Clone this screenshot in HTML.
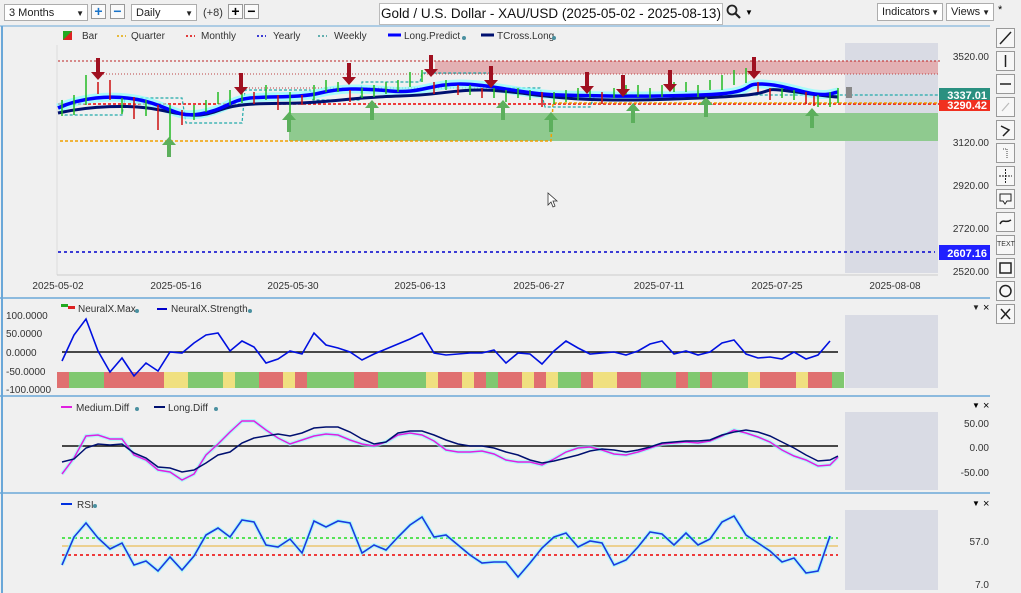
<!DOCTYPE html>
<html><head><meta charset="utf-8"><style>
body{margin:0;width:1021px;height:593px;overflow:hidden;background:#f0f0f0;font-family:"Liberation Sans",sans-serif;position:relative}
.tb{position:absolute;top:0;left:0;width:1021px;height:27px;background:#f0f0f0}
.sel{position:absolute;top:4px;height:17px;border:1px solid #adadad;background:#fff;font-size:11px;line-height:17px;padding-left:4px;box-sizing:border-box;color:#222}
.sel:after{content:"▼";position:absolute;right:3px;font-size:8px}
.btn{position:absolute;top:4px;width:15px;height:15px;border:1px solid #999;background:#fafafa;box-sizing:border-box;font-size:14px;line-height:12px;text-align:center;font-weight:bold}
.rb{position:absolute;left:996px;width:19px;height:20px;border:1px solid #999;background:#f7f7f7;box-sizing:border-box}
svg{position:absolute;top:0;left:0}
</style></head><body>
<div class="tb">
<div class="sel" style="left:4px;width:84px">3 Months</div>
<div class="btn" style="left:91px;color:#1a73c8">+</div>
<div class="btn" style="left:110px;color:#1a73c8">−</div>
<div class="sel" style="left:131px;width:66px">Daily</div>
<div style="position:absolute;left:203px;top:7px;font-size:11px;color:#333">(+8)</div>
<div class="btn" style="left:228px">+</div>
<div class="btn" style="left:244px">−</div>
<div style="position:absolute;left:379px;top:3px;width:342px;height:20px;border:1px solid #bbb;background:#fff;font-size:13.5px;line-height:20px;text-align:center;color:#111;white-space:nowrap;overflow:hidden">Gold / U.S. Dollar - XAU/USD (2025-05-02 - 2025-08-13)</div>
<svg style="left:726px;top:4px" width="16" height="16"><circle cx="6" cy="6" r="4.5" stroke="#222" stroke-width="1.8" fill="none"/><line x1="9.5" y1="9.5" x2="14" y2="14" stroke="#222" stroke-width="2.2"/></svg>
<div style="position:absolute;left:745px;top:8px;font-size:8px">▼</div>
<div class="sel" style="left:877px;width:66px;height:18px;top:3px">Indicators</div>
<div class="sel" style="left:946px;width:48px;height:18px;top:3px">Views</div>
<div style="position:absolute;left:998px;top:4px;font-size:11px">*</div>
</div>
<svg width="1021" height="593" viewBox="0 0 1021 593" font-family="Liberation Sans, sans-serif">
<defs><path id="da" d="M-2,0h4v14h5l-7,8l-7,-8h5z"/><path id="ua" d="M-2,20h4v-12h5l-7,-8l-7,8h5z"/></defs>
<line x1="0" y1="26" x2="990" y2="26" stroke="#6aa7d8"/>
<line x1="2" y1="26" x2="2" y2="593" stroke="#6aa7d8" stroke-width="2"/>
<rect x="63" y="31" width="9" height="9" fill="#2a2"/><polygon points="72,31 72,40 63,40" fill="#d22"/>
<g font-size="10" fill="#333">
<text x="82" y="39">Bar</text>
<line x1="117" y1="36" x2="126" y2="36" stroke="#e6a800" stroke-dasharray="2,2" stroke-width="1.5"/><text x="131" y="39">Quarter</text>
<line x1="186" y1="36" x2="195" y2="36" stroke="#d00" stroke-dasharray="2,2" stroke-width="1.5"/><text x="201" y="39">Monthly</text>
<line x1="257" y1="36" x2="266" y2="36" stroke="#00c" stroke-dasharray="2,2" stroke-width="1.5"/><text x="273" y="39">Yearly</text>
<line x1="318" y1="36" x2="327" y2="36" stroke="#399" stroke-dasharray="2,2" stroke-width="1.5"/><text x="334" y="39">Weekly</text>
<line x1="388" y1="35" x2="401" y2="35" stroke="#00f" stroke-width="3"/><text x="404" y="39">Long.Predict</text><circle cx="464" cy="38" r="2" fill="#4a90a0"/>
<line x1="481" y1="35" x2="494" y2="35" stroke="#001070" stroke-width="3"/><text x="497" y="39">TCross.Long</text><circle cx="554" cy="38" r="2" fill="#4a90a0"/>
</g>
<line x1="57" y1="45" x2="57" y2="275" stroke="#ddd"/>
<rect x="845" y="43" width="93" height="230" fill="#d9dbe4"/>
<rect x="435" y="61" width="503" height="13" fill="#e3b0b3"/>
<rect x="289" y="113" width="649" height="28" fill="#8fca8f"/>
<line x1="58" y1="61" x2="940" y2="61" stroke="#b22" stroke-dasharray="2,2"/>
<line x1="100" y1="74" x2="940" y2="74" stroke="#b44" stroke-dasharray="1,2"/>
<line x1="240" y1="88" x2="520" y2="88" stroke="#b44" stroke-dasharray="1,2"/>
<line x1="58" y1="104" x2="940" y2="104" stroke="#e00" stroke-dasharray="3,2" stroke-width="1.5"/>
<polyline points="60,141 551,141 553,103 940,103" fill="none" stroke="#f0a000" stroke-dasharray="3,2" stroke-width="1.5"/>
<line x1="58" y1="252" x2="935" y2="252" stroke="#00c" stroke-dasharray="3,3" stroke-width="1.5"/>
<polyline points="62,100 65,115 122,115 125,98 182,98 186,123 242,123 245,90 310,90 313,100 360,100 362,82 420,82 422,73 490,73 495,88 540,88 545,107 590,107 595,95 940,95" fill="none" stroke="#2aa" stroke-dasharray="3,2" stroke-width="1.2"/>
<path d="M58,108 C80,98 110,94 140,100 S175,118 200,114 S230,100 250,98 S300,98 320,93 S360,88 390,91 S430,84 460,84 S520,94 560,95 S640,97 700,95 S740,84 760,84 S800,92 815,94 S835,92 838,92" fill="none" stroke="#8ff" stroke-width="9" opacity=".7"/>
<path d="M58,113 C90,106 130,104 160,110 S200,118 220,110 S270,104 300,103 S360,97 400,96 S450,90 480,90 S540,97 580,99 S660,100 720,97 S760,88 780,90 S820,96 838,97" fill="none" stroke="#001070" stroke-width="3"/>
<path d="M58,108 C80,98 110,94 140,100 S175,118 200,114 S230,100 250,98 S300,98 320,93 S360,88 390,91 S430,84 460,84 S520,94 560,95 S640,97 700,95 S740,84 760,84 S800,92 815,94 S835,92 838,92" fill="none" stroke="#0000ff" stroke-width="3.5"/>
<g stroke-width="1.5">
<g stroke="#2b2"><path d="M62,100v16M74,95v20M86,75v30M122,98v16M146,100v16M170,105v40M194,105v15M206,100v12M218,92v12M230,90v15M242,88v15M266,85v15M290,92v22M314,85v15M326,80v12M338,82v10M362,88v10M374,85v12M386,82v12M398,80v12M410,72v15M422,70v12M446,80v10M470,85v10M494,88v10M506,90v12M518,88v10M530,90v10M554,92v12M566,90v12M578,88v12M590,88v10M614,88v10M626,85v10M638,85v12M650,88v10M662,85v12M674,82v10M686,82v10M698,85v12M710,80v10M722,75v15M734,70v15M746,68v15M782,88v10M794,90v10M818,95v12M830,92v15M838,88v15"/></g>
<g stroke="#c11"><path d="M98,82v12M110,80v20M134,97v22M158,105v25M182,110v15M254,92v12M278,95v15M302,95v10M350,90v12M434,82v12M458,85v10M482,88v10M542,92v15M602,92v12M758,82v10M770,88v12M806,92v12M814,96v10"/></g>
</g>
<g fill="#a01020">
<use href="#da" x="98" y="58"/><use href="#da" x="241" y="73"/><use href="#da" x="349" y="63"/><use href="#da" x="431" y="55"/><use href="#da" x="491" y="66"/><use href="#da" x="587" y="72"/><use href="#da" x="623" y="75"/><use href="#da" x="670" y="70"/><use href="#da" x="754" y="57"/></g>
<g fill="#5caf5c">
<use href="#ua" x="169" y="137"/><use href="#ua" x="289" y="112"/><use href="#ua" x="372" y="100"/><use href="#ua" x="503" y="100"/><use href="#ua" x="551" y="112"/><use href="#ua" x="633" y="103"/><use href="#ua" x="706" y="97"/><use href="#ua" x="812" y="108"/></g>
<rect x="846" y="87" width="6" height="11" fill="#888"/>
<g font-size="10" fill="#333" text-anchor="end">
<text x="989" y="60">3520.00</text><text x="989" y="146">3120.00</text><text x="989" y="189">2920.00</text><text x="989" y="232">2720.00</text><text x="989" y="275">2520.00</text></g>
<rect x="939" y="88" width="51" height="13" fill="#2a9080"/><text x="987" y="99" font-size="11" font-weight="bold" fill="#fff" text-anchor="end">3337.01</text>
<rect x="939" y="100" width="51" height="11" fill="#f03020"/><text x="987" y="109" font-size="11" font-weight="bold" fill="#fff" text-anchor="end">3290.42</text>
<rect x="939" y="245" width="51" height="15" fill="#2020ff"/><text x="987" y="257" font-size="11" font-weight="bold" fill="#fff" text-anchor="end">2607.16</text>
<line x1="57" y1="275" x2="938" y2="275" stroke="#ccc"/>
<g font-size="10" fill="#333" text-anchor="middle">
<text x="58" y="289">2025-05-02</text><text x="176" y="289">2025-05-16</text><text x="293" y="289">2025-05-30</text><text x="420" y="289">2025-06-13</text><text x="539" y="289">2025-06-27</text><text x="659" y="289">2025-07-11</text><text x="777" y="289">2025-07-25</text><text x="895" y="289">2025-08-08</text></g>
<path d="M548,193 l0,12 l3,-3 l2,5 l2,-1 l-2,-5 l4,0z" fill="#fff" stroke="#333" stroke-width=".8"/>
<line x1="0" y1="298" x2="990" y2="298" stroke="#6aa7d8" stroke-width="1.5"/>
<rect x="845" y="315" width="93" height="73" fill="#d9dbe4"/>
<g font-size="8" fill="#222"><text x="972" y="310">▼</text></g><text x="983" y="311" font-size="11">×</text>
<rect x="61" y="304" width="7" height="3" fill="#2a2"/><rect x="68" y="306" width="7" height="3" fill="#d22"/>
<text x="78" y="312" font-size="10" fill="#333">NeuralX.Max</text><circle cx="137" cy="311" r="2" fill="#4a90a0"/>
<line x1="157" y1="309" x2="167" y2="309" stroke="#00c" stroke-width="2"/><text x="171" y="312" font-size="10" fill="#333">NeuralX.Strength</text><circle cx="250" cy="311" r="2" fill="#4a90a0"/>
<g font-size="10" fill="#333"><text x="6" y="319">100.0000</text><text x="6" y="337">50.0000</text><text x="6" y="356">0.0000</text><text x="6" y="375">-50.0000</text><text x="6" y="393">-100.0000</text></g>
<g>
<rect x="57" y="372" width="12" height="16" fill="#e07070"/><rect x="69" y="372" width="35" height="16" fill="#80c870"/><rect x="104" y="372" width="60" height="16" fill="#e07070"/><rect x="164" y="372" width="24" height="16" fill="#f0e080"/><rect x="188" y="372" width="35" height="16" fill="#80c870"/><rect x="223" y="372" width="12" height="16" fill="#f0e080"/><rect x="235" y="372" width="24" height="16" fill="#80c870"/><rect x="259" y="372" width="24" height="16" fill="#e07070"/><rect x="283" y="372" width="12" height="16" fill="#f0e080"/><rect x="295" y="372" width="12" height="16" fill="#e07070"/><rect x="307" y="372" width="47" height="16" fill="#80c870"/><rect x="354" y="372" width="24" height="16" fill="#e07070"/><rect x="378" y="372" width="48" height="16" fill="#80c870"/><rect x="426" y="372" width="12" height="16" fill="#f0e080"/><rect x="438" y="372" width="24" height="16" fill="#e07070"/><rect x="462" y="372" width="12" height="16" fill="#f0e080"/><rect x="474" y="372" width="12" height="16" fill="#e07070"/><rect x="486" y="372" width="12" height="16" fill="#80c870"/><rect x="498" y="372" width="24" height="16" fill="#e07070"/><rect x="522" y="372" width="12" height="16" fill="#f0e080"/><rect x="534" y="372" width="12" height="16" fill="#e07070"/><rect x="546" y="372" width="12" height="16" fill="#f0e080"/><rect x="558" y="372" width="23" height="16" fill="#80c870"/><rect x="581" y="372" width="12" height="16" fill="#e07070"/><rect x="593" y="372" width="24" height="16" fill="#f0e080"/><rect x="617" y="372" width="24" height="16" fill="#e07070"/><rect x="641" y="372" width="35" height="16" fill="#80c870"/><rect x="676" y="372" width="12" height="16" fill="#e07070"/><rect x="688" y="372" width="12" height="16" fill="#80c870"/><rect x="700" y="372" width="12" height="16" fill="#e07070"/><rect x="712" y="372" width="36" height="16" fill="#80c870"/><rect x="748" y="372" width="12" height="16" fill="#f0e080"/><rect x="760" y="372" width="36" height="16" fill="#e07070"/><rect x="796" y="372" width="12" height="16" fill="#f0e080"/><rect x="808" y="372" width="24" height="16" fill="#e07070"/><rect x="832" y="372" width="12" height="16" fill="#80c870"/>
</g>
<line x1="62" y1="352" x2="838" y2="352" stroke="#111" stroke-width="1.5"/>
<polyline points="62,361 74,335 86,319 98,351 110,372 122,358 134,376 146,363 158,371 170,352 182,353 194,343 206,335 218,333 230,351 242,341 254,347 266,363 278,359 290,351 302,354 314,333 326,345 338,348 350,352 362,360 374,354 386,349 398,344 410,339 422,333 434,353 446,355 458,354 470,353 482,353 494,350 506,363 518,353 530,354 542,364 554,351 566,341 578,348 590,354 602,353 614,352 626,355 638,351 650,344 662,341 674,354 686,351 698,355 710,352 722,343 734,340 746,354 758,358 770,357 782,359 794,352 806,359 818,355 830,341" fill="none" stroke="#0010e0" stroke-width="1.6"/>
<line x1="0" y1="396" x2="990" y2="396" stroke="#6aa7d8" stroke-width="1.5"/>
<rect x="845" y="412" width="93" height="78" fill="#d9dbe4"/>
<text x="972" y="408" font-size="8">▼</text><text x="983" y="409" font-size="11">×</text>
<line x1="61" y1="407" x2="72" y2="407" stroke="#e020e0" stroke-width="2"/><text x="76" y="411" font-size="10" fill="#333">Medium.Diff</text><circle cx="137" cy="409" r="2" fill="#4a90a0"/>
<line x1="154" y1="407" x2="165" y2="407" stroke="#001070" stroke-width="2"/><text x="168" y="411" font-size="10" fill="#333">Long.Diff</text><circle cx="216" cy="409" r="2" fill="#4a90a0"/>
<g font-size="10" fill="#333" text-anchor="end"><text x="989" y="427">50.00</text><text x="989" y="451">0.00</text><text x="989" y="476">-50.00</text></g>
<line x1="62" y1="446" x2="838" y2="446" stroke="#111" stroke-width="1.5"/>
<polyline points="62,474 74,458 86,436 98,435 110,439 122,439 134,455 146,460 158,470 170,472 182,480 194,474 206,455 218,444 230,432 242,421 254,421 266,430 278,438 290,444 302,440 314,436 326,434 338,435 350,440 362,444 374,446 386,442 398,435 410,433 422,435 434,441 446,450 458,452 470,452 482,451 494,454 506,460 518,462 530,462 542,465 554,459 566,452 578,448 590,447 602,450 614,454 626,455 638,452 650,448 662,444 674,443 686,442 698,443 710,441 722,436 734,430 746,433 758,437 770,442 782,450 794,456 806,460 818,466 830,465 838,457" fill="none" stroke="#8ff" stroke-width="4" opacity=".6"/>
<polyline points="62,474 74,458 86,436 98,435 110,439 122,439 134,455 146,460 158,470 170,472 182,480 194,474 206,455 218,444 230,432 242,421 254,421 266,430 278,438 290,444 302,440 314,436 326,434 338,435 350,440 362,444 374,446 386,442 398,435 410,433 422,435 434,441 446,450 458,452 470,452 482,451 494,454 506,460 518,462 530,462 542,465 554,459 566,452 578,448 590,447 602,450 614,454 626,455 638,452 650,448 662,444 674,443 686,442 698,443 710,441 722,436 734,430 746,433 758,437 770,442 782,450 794,456 806,460 818,466 830,465 838,457" fill="none" stroke="#e020e0" stroke-width="1.5"/>
<polyline points="62,462 74,459 86,448 98,444 110,445 122,444 134,453 146,458 158,467 170,468 182,472 194,470 206,463 218,455 230,452 242,443 254,438 266,436 278,434 290,436 302,433 314,428 326,427 338,427 350,432 362,439 374,444 386,442 398,433 410,431 422,431 434,435 446,440 458,444 470,446 482,446 494,448 506,452 518,455 530,460 542,463 554,461 566,458 578,455 590,451 602,449 614,450 626,452 638,450 650,447 662,443 674,442 686,441 698,441 710,440 722,435 734,432 746,430 758,432 770,436 782,442 794,448 806,455 818,461 830,460 838,456" fill="none" stroke="#001070" stroke-width="1.5"/>
<line x1="0" y1="493" x2="990" y2="493" stroke="#6aa7d8" stroke-width="1.5"/>
<rect x="845" y="510" width="93" height="80" fill="#d9dbe4"/>
<text x="972" y="506" font-size="8">▼</text><text x="983" y="507" font-size="11">×</text>
<line x1="61" y1="504" x2="72" y2="504" stroke="#0030e0" stroke-width="2"/><text x="77" y="508" font-size="10" fill="#333">RSI</text><circle cx="95" cy="506" r="2" fill="#4a90a0"/>
<g font-size="10" fill="#333" text-anchor="end"><text x="989" y="545">57.0</text><text x="989" y="588">7.0</text></g>
<line x1="62" y1="538" x2="838" y2="538" stroke="#2d2" stroke-dasharray="3,3" stroke-width="1.5"/>
<line x1="62" y1="546" x2="838" y2="546" stroke="#e8b030"/>
<line x1="62" y1="555" x2="838" y2="555" stroke="#e00" stroke-dasharray="3,3" stroke-width="1.5"/>
<polyline points="62,565 74,537 86,523 98,538 110,549 122,543 134,565 146,561 158,571 170,557 182,570 194,556 206,535 218,528 230,537 242,520 254,522 266,545 278,547 290,539 302,553 314,521 326,527 338,521 350,523 362,553 374,545 386,550 398,537 410,525 422,517 434,537 446,535 458,545 470,555 482,563 494,562 506,562 518,577 530,563 542,548 554,537 566,533 578,547 590,541 602,543 614,565 626,560 638,547 650,532 662,534 674,545 686,533 698,545 710,539 722,522 734,516 746,535 758,543 770,551 782,562 794,558 806,573 818,571 830,536" fill="none" stroke="#8ff" stroke-width="4" opacity=".6"/>
<polyline points="62,565 74,537 86,523 98,538 110,549 122,543 134,565 146,561 158,571 170,557 182,570 194,556 206,535 218,528 230,537 242,520 254,522 266,545 278,547 290,539 302,553 314,521 326,527 338,521 350,523 362,553 374,545 386,550 398,537 410,525 422,517 434,537 446,535 458,545 470,555 482,563 494,562 506,562 518,577 530,563 542,548 554,537 566,533 578,547 590,541 602,543 614,565 626,560 638,547 650,532 662,534 674,545 686,533 698,545 710,539 722,522 734,516 746,535 758,543 770,551 782,562 794,558 806,573 818,571 830,536" fill="none" stroke="#1a3ae0" stroke-width="1.6"/>
</svg>
<div class="rb" style="top:28px"><svg width="17" height="18"><line x1="3" y1="15" x2="14" y2="3" stroke="#222" stroke-width="1.5"/></svg></div>
<div class="rb" style="top:51px"><svg width="17" height="18"><line x1="8.5" y1="3" x2="8.5" y2="15" stroke="#222" stroke-width="1.5"/></svg></div>
<div class="rb" style="top:74px"><svg width="17" height="18"><line x1="3" y1="9" x2="14" y2="9" stroke="#222" stroke-width="1.5"/></svg></div>
<div class="rb" style="top:97px"><svg width="17" height="18"><line x1="5" y1="13" x2="12" y2="5" stroke="#bbb" stroke-width="1.2"/></svg></div>
<div class="rb" style="top:120px"><svg width="17" height="18"><path d="M4,5l8,4l-6,6" stroke="#222" fill="none" stroke-width="1.5"/></svg></div>
<div class="rb" style="top:143px"><svg width="17" height="18"><path d="M6,5h4v9" stroke="#444" fill="none" stroke-dasharray="1,1"/></svg></div>
<div class="rb" style="top:166px"><svg width="17" height="18"><path d="M8.5,2v14M2,9h13" stroke="#222" stroke-dasharray="2,1"/></svg></div>
<div class="rb" style="top:189px"><svg width="17" height="18"><path d="M3,4h11v7h-4l-2,3l-2,-3h-3z" stroke="#222" fill="none"/></svg></div>
<div class="rb" style="top:212px"><svg width="17" height="18"><path d="M3,11c3,-6 5,0 11,-4" stroke="#222" fill="none" stroke-width="1.5"/></svg></div>
<div class="rb" style="top:235px;font-size:7px;text-align:center;line-height:18px;color:#333">TEXT</div>
<div class="rb" style="top:258px"><svg width="17" height="18"><rect x="3" y="4" width="11" height="10" stroke="#222" fill="none" stroke-width="1.5"/></svg></div>
<div class="rb" style="top:281px"><svg width="17" height="18"><circle cx="8.5" cy="9" r="5.5" stroke="#222" fill="none" stroke-width="1.5"/></svg></div>
<div class="rb" style="top:304px"><svg width="17" height="18"><path d="M4,4l9,10M13,4l-9,10" stroke="#222" stroke-width="1.5"/></svg></div>
</body></html>
